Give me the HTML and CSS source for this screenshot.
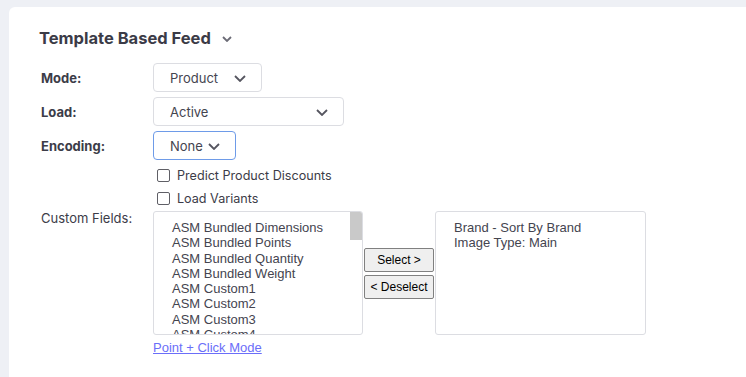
FILE: index.html
```html
<!DOCTYPE html>
<html lang="en">
<head>
    <meta charset="UTF-8">
    <meta name="viewport" content="width=device-width, initial-scale=1.0">
    <title>Template Based Feed</title>
    <link rel="stylesheet" href="styles.css">
</head>
<body>
    <div class="panel">
        <h2 class="panel-title">Template Based Feed
            <svg class="chev" width="10" height="6" viewBox="0 0 10 6"><path d="M1 1l4 4 4-4" fill="none" stroke="#6b6b76" stroke-width="1.8"/></svg>
        </h2>

        <div class="form">
            <div class="label bold">Mode:</div>
            <div class="select w-mode"><span>Product</span>
                <svg width="12" height="7" viewBox="0 0 12 7"><path d="M1 1l5 5 5-5" fill="none" stroke="#55555f" stroke-width="1.8"/></svg>
            </div>

            <div class="label bold">Load:</div>
            <div class="select w-load"><span>Active</span>
                <svg width="12" height="7" viewBox="0 0 12 7"><path d="M1 1l5 5 5-5" fill="none" stroke="#55555f" stroke-width="1.8"/></svg>
            </div>

            <div class="label bold">Encoding:</div>
            <div class="select w-enc focused"><span>None</span>
                <svg width="12" height="7" viewBox="0 0 12 7"><path d="M1 1l5 5 5-5" fill="none" stroke="#55555f" stroke-width="1.8"/></svg>
            </div>

            <div></div>
            <div class="checks">
                <label class="check"><span class="box"></span>Predict Product Discounts</label>
                <label class="check"><span class="box"></span>Load Variants</label>
            </div>

            <div class="label custom">Custom Fields:</div>
            <div>
                <div class="picker">
                    <div class="listbox">
                        <div class="items">
                            <div>ASM Bundled Dimensions</div>
                            <div>ASM Bundled Points</div>
                            <div>ASM Bundled Quantity</div>
                            <div>ASM Bundled Weight</div>
                            <div>ASM Custom1</div>
                            <div>ASM Custom2</div>
                            <div>ASM Custom3</div>
                            <div>ASM Custom4</div>
                        </div>
                        <div class="scroll"><div class="thumb"></div></div>
                    </div>
                    <div class="buttons">
                        <button>Select &gt;</button>
                        <button>&lt; Deselect</button>
                    </div>
                    <div class="listbox right">
                        <div class="items">
                            <div>Brand - Sort By Brand</div>
                            <div>Image Type: Main</div>
                        </div>
                    </div>
                </div>
                <a href="#" class="link">Point + Click Mode</a>
            </div>
        </div>
    </div>
</body>
</html>
```

FILE: styles.css
```css
html, body { overflow: hidden; }
body { margin: 0; padding: 7px 0 0 9px; background: #eef0f5; font-family: Inter, "Liberation Sans", Arial, sans-serif; color: #3c3c48; }
.panel { background: #fff; border-top-left-radius: 6px; padding: 20px 0 0 30px; height: 350px; }
.panel-title { margin: 0 0 14px 0; font-size: 16.5px; font-weight: 700; color: #3b3b47; display: flex; align-items: center; height: 22px; }
.panel-title .chev { margin-left: 11px; margin-top: 1px; }

.form { display: grid; grid-template-columns: 114px auto; row-gap: 5px; align-items: center; justify-items: start; }
.label { font-size: 13px; padding-left: 2px; color: #3c3c48; }
.bold { font-weight: 700; }
.custom { align-self: start; margin-top: -1px; font-weight: 400; }

.select { height: 27px; border: 1px solid #dcdde2; border-radius: 4px; display: flex; align-items: center; justify-content: space-between; padding: 0 15px 0 16px; font-size: 13px; color: #44444f; box-sizing: content-box; }
.select svg { margin-top: 1px; }
.w-mode { width: 76px; }
.w-load { width: 158px; }
.w-enc { width: 50px; }
.focused { border-color: #6e9be8; }

.checks { display: flex; flex-direction: column; gap: 7px; padding: 2px 0 0 4px; }
.check { display: flex; align-items: center; font-size: 12.6px; color: #3c3c48; height: 16px; }
.box { width: 11px; height: 11px; border: 1px solid #5f5f66; border-radius: 2px; margin-right: 7px; }

.picker { display: flex; align-items: center; margin-top: 0; }
.listbox { width: 208px; height: 122px; border: 1px solid #dcdde2; border-radius: 3px; display: flex; overflow: hidden; }
.items { flex: 1; padding: 8px 0 0 18px; font-family: "Liberation Sans", Arial, sans-serif; font-size: 13px; line-height: 15.3px; color: #44444f; white-space: nowrap; overflow: hidden; }
.scroll { width: 12px; }
.thumb { height: 28px; background: #c9c9c9; }
.right { width: 209px; margin-left: 1px; }
.buttons { display: flex; flex-direction: column; gap: 3px; margin-left: 1px; }
.buttons button { width: 70px; height: 24px; font-family: "Liberation Sans", Arial, sans-serif; font-size: 12px; color: #000; background: #efefef; border: 1px solid #808080; border-radius: 2px; padding: 0; }

.link { display: inline-block; margin-top: 5px; font-family: "Liberation Sans", Arial, sans-serif; font-size: 13px; color: #6b6ef9; }
```
